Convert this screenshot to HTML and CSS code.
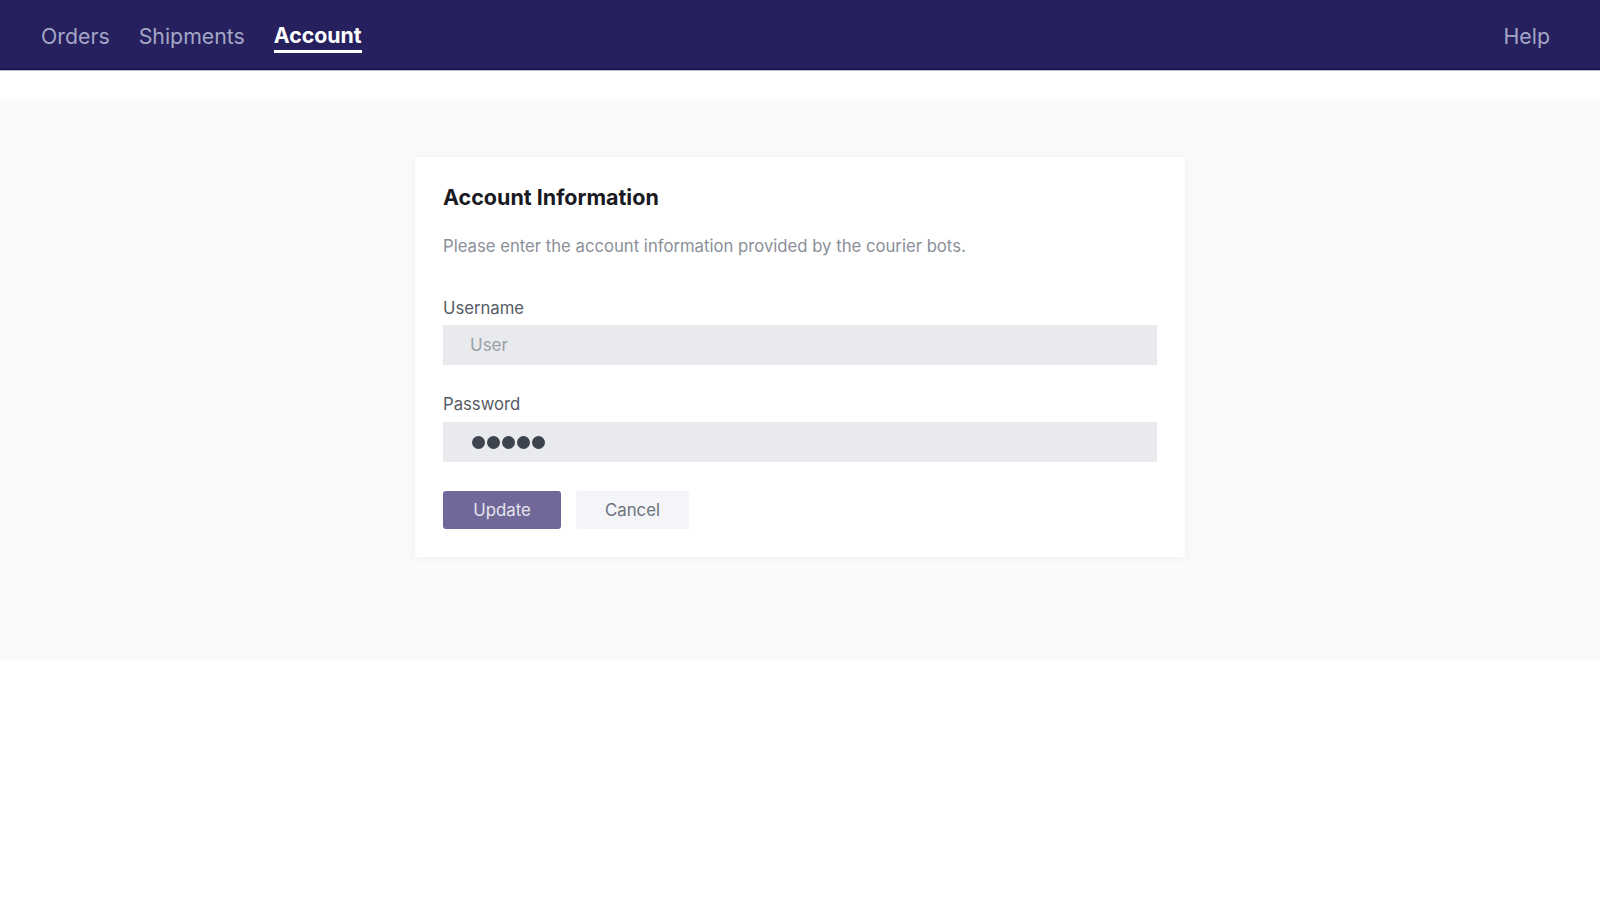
FILE: index.html
```
<!DOCTYPE html>
<html>
  <head>
    <meta http-equiv="Content-Type" content="text/html; charset=utf-8" />
    <title>Account</title>
    <link rel="stylesheet" href="styles.css">
  </head>
  <body>
    <nav class="topnav">
      <div class="topnav-links">
        <a href="#" class="topnav-link">Orders</a>
        <a href="#" class="topnav-link">Shipments</a>
        <a href="#" class="topnav-link topnav-link--active">Account</a>
      </div>
      <a href="#" class="topnav-link">Help</a>
    </nav>
    <main class="page">
      <section class="card">
        <h2 class="card-title">Account Information</h2>
        <p class="card-desc">
          Please enter the account information provided by the courier bots.
        </p>
        <form class="form">
          <label class="field-label" for="username">Username</label>
          <input class="field-input" id="username" type="text" placeholder="User" />
          <label class="field-label field-label--next" for="password">Password</label>
          <div class="field-input field-input--password" id="password">
            <span class="dot"></span><span class="dot"></span><span class="dot"></span><span class="dot"></span><span class="dot"></span>
          </div>
          <div class="actions">
            <button type="button" class="btn btn--primary">Update</button>
            <button type="button" class="btn btn--ghost">Cancel</button>
          </div>
        </form>
      </section>
    </main>
  </body>
</html>
```

FILE: styles.css
```
* {
  box-sizing: border-box;
  font-family: Inter, 'Noto Sans', 'Liberation Sans', sans-serif;
}
html,
body {
  margin: 0;
  padding: 0;
  background: #fff;
}
.topnav {
  height: 71px;
  background: #26205e;
  border-bottom: 1px solid #b9b6d0;
  box-shadow: inset 0 -2px 0 #1c1750;
  display: flex;
  align-items: center;
  justify-content: space-between;
  padding: 0 50px 0 41px;
}
.topnav-links {
  display: flex;
  gap: 29px;
}
.topnav-link {
  color: #a4a6c6;
  text-decoration: none;
  font-size: 21.3px;
  line-height: 28px;
  padding-top: 4px;
  border-bottom: 3px solid transparent;
}
.topnav-link--active {
  color: #fff;
  font-weight: 700;
  border-bottom-color: #fff;
  padding-top: 3px;
}
.page {
  margin-top: 28px;
  background: #fafafa;
  height: 561px;
  padding-top: 58px;
}
.card {
  width: 770px;
  margin: 0 auto;
  background: #fff;
  padding: 28px;
  box-shadow: 0 0 10px rgba(0, 0, 0, 0.05);
}
.card-title {
  margin: 0;
  font-size: 21.5px;
  line-height: 24px;
  font-weight: 700;
  color: #1a1a22;
}
.card-desc {
  margin: 25px 0 0 0;
  font-size: 16.7px;
  line-height: 24px;
  color: #8a8f99;
}
.form {
  display: flex;
  flex-direction: column;
  margin-top: 40px;
}
.field-label {
  font-size: 16.7px;
  line-height: 20px;
  color: #555a63;
}
.field-label--next {
  margin-top: 29px;
}
.field-input {
  margin-top: 7px;
  height: 40px;
  border: none;
  outline: none;
  background: #e8eaed;
  padding: 0 27px;
  font-size: 17px;
  color: #333;
}
.field-input::placeholder {
  color: #9aa0a8;
}
.field-input--password {
  display: flex;
  align-items: center;
  gap: 2px;
  margin-top: 8px;
  padding-left: 29px;
}
.dot {
  width: 13px;
  height: 13px;
  border-radius: 50%;
  background: #3d4450;
}
.actions {
  display: flex;
  gap: 15px;
  margin-top: 29px;
}
.btn {
  height: 38px;
  border: none;
  border-radius: 3px;
  font-size: 16.8px;
  cursor: pointer;
}
.btn--primary {
  width: 118px;
  background: #6f6898;
  color: #e6e4ef;
}
.btn--ghost {
  width: 113px;
  background: #f3f5f8;
  color: #6e727a;
}
```
